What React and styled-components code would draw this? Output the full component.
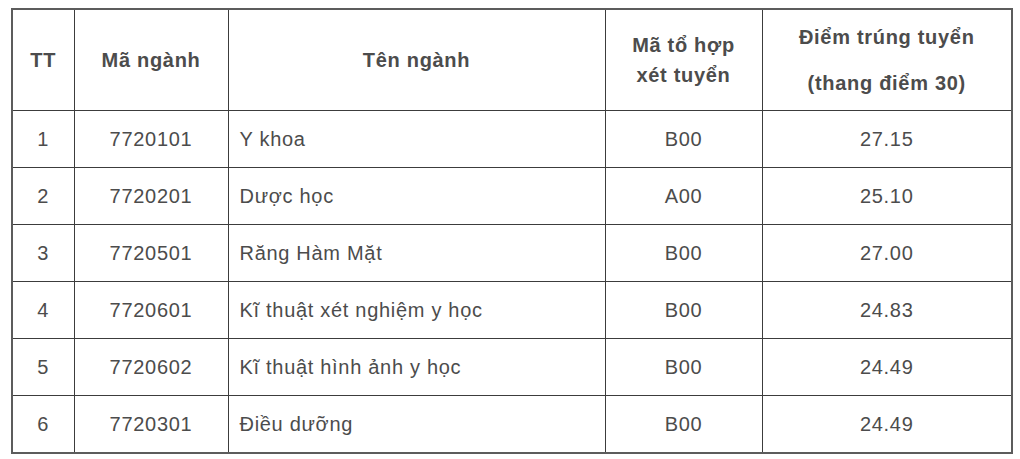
import React from "react";
import styled, { createGlobalStyle } from "styled-components";

const Global = createGlobalStyle`
  html, body { margin: 0; padding: 0; background: #fff; }
  body { font-family: "Liberation Sans", Arial, sans-serif; }
`;

const Page = styled.div`
  padding: 8px 0 0 11px;
`;

const Table = styled.table`
  border-collapse: collapse;
  table-layout: fixed;
  width: 1000px;
  border: 2px solid #5c5c5c;
  color: #4c4c4c;
  font-size: 20px;
  letter-spacing: 0.7px;
`;

const HeadCell = styled.th`
  height: 100px;
  padding: 0;
  border: 1px solid #3c3c3c;
  font-weight: bold;
  text-align: center;
  vertical-align: middle;
  line-height: 30px;
  white-space: nowrap;
`;

const Line = styled.div`
  line-height: ${(p) => p.$lh || 30}px;
`;

const Cell = styled.td`
  height: 55px;
  padding: 1px ${(p) => (p.$left ? "11px" : "0")} 0;
  border: 1px solid #3c3c3c;
  line-height: 23px;
  text-align: ${(p) => (p.$left ? "left" : "center")};
  vertical-align: middle;
  white-space: nowrap;
`;

const rows = [
  ["1", "7720101", "Y khoa", "B00", "27.15"],
  ["2", "7720201", "Dược học", "A00", "25.10"],
  ["3", "7720501", "Răng Hàm Mặt", "B00", "27.00"],
  ["4", "7720601", "Kĩ thuật xét nghiệm y học", "B00", "24.83"],
  ["5", "7720602", "Kĩ thuật hình ảnh y học", "B00", "24.49"],
  ["6", "7720301", "Điều dưỡng", "B00", "24.49"],
];

export default function App() {
  return (
    <Page>
      <Global />
      <Table>
        <colgroup>
          <col style={{ width: 62 }} />
          <col style={{ width: 154 }} />
          <col style={{ width: 377 }} />
          <col style={{ width: 157 }} />
          <col style={{ width: 250 }} />
        </colgroup>
        <thead>
          <tr>
            <HeadCell>TT</HeadCell>
            <HeadCell>Mã ngành</HeadCell>
            <HeadCell>Tên ngành</HeadCell>
            <HeadCell>
              <Line>Mã tổ hợp</Line>
              <Line>xét tuyển</Line>
            </HeadCell>
            <HeadCell>
              <Line $lh={46}>Điểm trúng tuyển</Line>
              <Line $lh={46}>(thang điểm 30)</Line>
            </HeadCell>
          </tr>
        </thead>
        <tbody>
          {rows.map((r) => (
            <tr key={r[0]}>
              <Cell>{r[0]}</Cell>
              <Cell>{r[1]}</Cell>
              <Cell $left>{r[2]}</Cell>
              <Cell>{r[3]}</Cell>
              <Cell>{r[4]}</Cell>
            </tr>
          ))}
        </tbody>
      </Table>
    </Page>
  );
}
